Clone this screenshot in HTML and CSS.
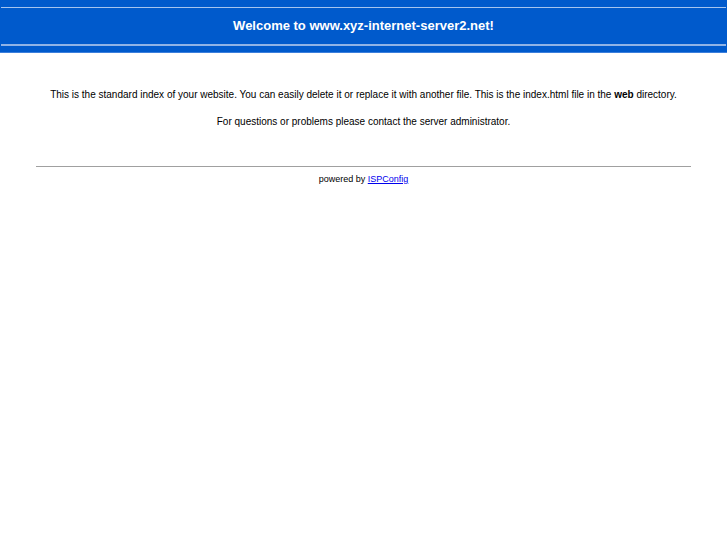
FILE: index.html
```html
<!DOCTYPE html>
<html>
<head>
<meta charset="utf-8">
<title>Welcome</title>
<link rel="stylesheet" href="styles.css">
</head>
<body>
<div class="header">
  <div class="line top"></div>
  <div class="title">Welcome to www.xyz-internet-server2.net!</div>
  <div class="line bottom"></div>
  <div class="strip"></div>
</div>
<div class="content">
  <p>This is the standard index of your website. You can easily delete it or replace it with another file. This is the index.html file in the <b>web</b> directory.</p>
  <p>For questions or problems please contact the server administrator.</p>
</div>
<hr class="rule">
<div class="powered">powered by <a href="#">ISPConfig</a></div>
</body>
</html>
```
FILE: styles.css
```css
html, body { margin: 0; padding: 0; background: #fff; }
body { font-family: "Liberation Sans", Arial, sans-serif; color: #000; }
.header { background: #005acc; height: 53px; display: flex; flex-direction: column; }
.line { margin: 0 1px; background: #a6c4ee; }
.line.top { height: 1px; margin-top: 7px; }
.title { height: 36px; line-height: 36px; color: #fff; font-weight: bold; font-size: 13px; text-align: center; }
.line.bottom { height: 2px; background: #8fb3e6; }
.strip { margin-top: 6px; height: 1px; background: #3c7fdc; }
.content { padding-top: 35px; text-align: center; font-size: 10px; }
.content p { margin: 0 0 14px 0; line-height: 13px; }
.rule { width: 90%; margin: 38px auto 7px; border: 0; border-top: 1px solid #a0a0a0; height: 0; }
.powered { text-align: center; font-size: 9px; }
.powered a { color: #0000ee; }
```
